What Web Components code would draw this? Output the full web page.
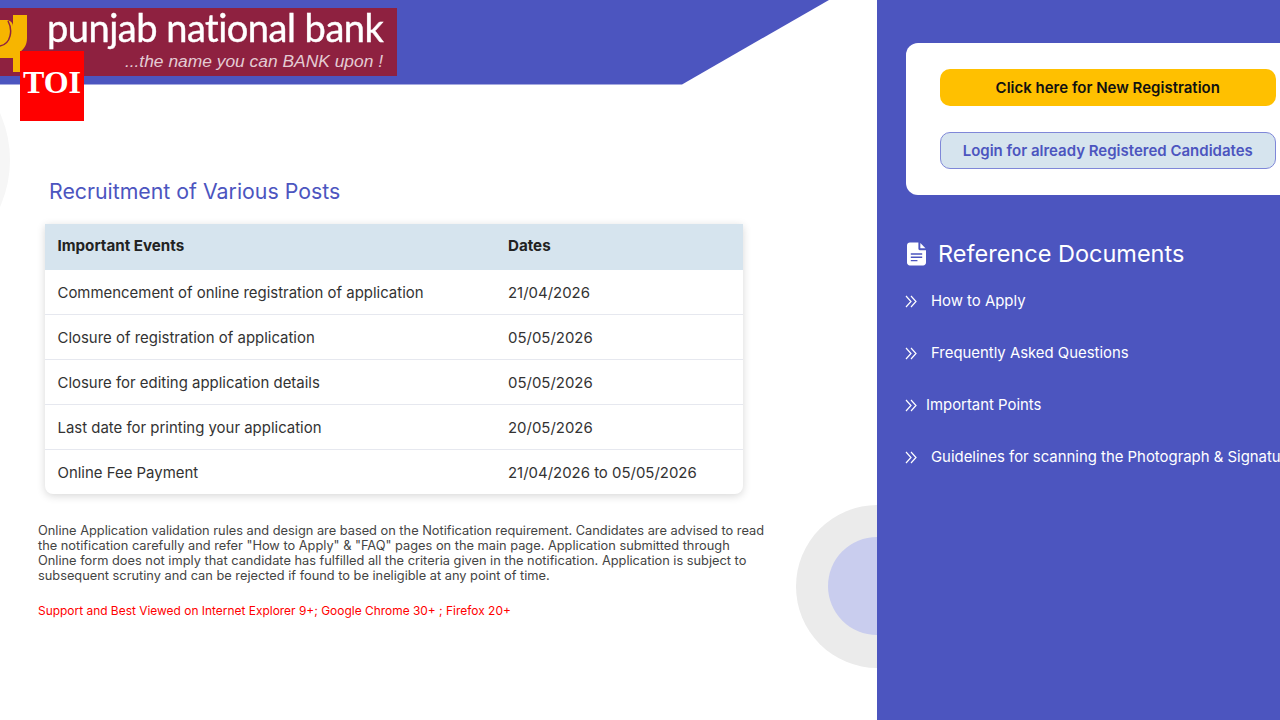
<!DOCTYPE html>
<html>
<head>
<meta charset="utf-8">
<title>Recruitment of Various Posts</title>
<style>
    html, body { margin: 0; padding: 0; height: 100%; overflow: hidden; background: #fff; }
    body { font-family: Inter, "Liberation Sans", sans-serif; }
</style>
</head>
<body>
<recruit-page>
    <page-header slot="header"></page-header>
    <main-panel slot="main" heading="Recruitment of Various Posts">
        <events-table></events-table>
        <p>Online Application validation rules and design are based on the Notification requirement. Candidates are advised to read the notification carefully and refer "How to Apply" &amp; "FAQ" pages on the main page. Application submitted through Online form does not imply that candidate has fulfilled all the criteria given in the notification. Application is subject to subsequent scrutiny and can be rejected if found to be ineligible at any point of time.</p>
        <p class="red">Support and Best Viewed on Internet Explorer 9+; Google Chrome 30+ ; Firefox 20+</p>
    </main-panel>
    <side-panel slot="side"></side-panel>
</recruit-page>
<script>
class RecruitPage extends HTMLElement {
    constructor() {
        super();
        this.attachShadow({ mode: 'open' });
        this.shadowRoot.innerHTML = `
            <style>
                :host { display: block; position: relative; width: 1280px; height: 720px; overflow: hidden; }
                .cols { display: grid; grid-template-columns: 877px 403px; height: 720px; }
                .left { position: relative; overflow: hidden; display: flex; flex-direction: column; }
                .ring-left { position: absolute; left: -220px; top: 45px; width: 230px; height: 230px; border-radius: 50%; background: #f6f6f6; }
                .ring { position: absolute; left: 796px; top: 505px; width: 163px; height: 163px; border-radius: 50%; background: #ebebeb; }
                .dot { position: absolute; left: 828px; top: 537px; width: 98px; height: 98px; border-radius: 50%; background: #c9cdee; }
                .toi { position: absolute; left: 20px; top: 51px; width: 64px; height: 70px; padding-bottom: 8px; box-sizing: border-box; background: #f00; color: #fff;
                       display: flex; align-items: center; justify-content: center;
                       font: bold 32px "Liberation Serif", serif; }
            </style>
            <div class="cols">
                <div class="left">
                    <div class="ring-left"></div>
                    <div class="ring"></div>
                    <div class="dot"></div>
                    <slot name="header"></slot>
                    <slot name="main"></slot>
                </div>
                <slot name="side"></slot>
            </div>
            <div class="toi">TOI</div>
        `;
    }
}

class PageHeader extends HTMLElement {
    constructor() {
        super();
        this.attachShadow({ mode: 'open' });
        this.shadowRoot.innerHTML = `
            <style>
                :host { display: block; height: 85px; background: #4c55bf; clip-path: polygon(0 0, 829px 0, 682px 84.5px, 0 84.5px); padding-top: 8px; box-sizing: border-box; position: relative; }
                .logo { width: 397px; height: 68px; background: #8e2140; position: relative; }
                svg { position: absolute; left: 0; top: 0; filter: blur(.4px); }
                .name { position: absolute; left: 47px; top: -1px; color: #fff; font: 400 38px/40px Lato, sans-serif; letter-spacing: -.5px; white-space: nowrap; -webkit-text-stroke: .4px #fff; filter: blur(.3px); }
                .tag { position: absolute; right: 14px; top: 42px; color: #e4cbd3; font: italic 17.4px/22px "Liberation Sans", sans-serif; white-space: nowrap; }
            </style>
            <div class="logo">
                <svg width="30" height="68" viewBox="0 0 30 68">
                    <path d="M13 7H27V30C27 37 24 41 20 44V64H13V50H0V12H6C9 12 13 14 13 18Z" fill="#f7b500"/>
                    <path d="M8 13C13 22 11 36 0 38" fill="none" stroke="#8e2140" stroke-width="1.500"/>
                </svg>
                <span class="name">punjab national bank</span>
                <span class="tag">...the name you can BANK upon !</span>
            </div>
        `;
    }
}

class MainPanel extends HTMLElement {
    constructor() {
        super();
        this.attachShadow({ mode: 'open' });
        this.shadowRoot.innerHTML = `
            <style>
                :host { display: block; padding: 93px 0 0 38px; position: relative; }
                h2 { margin: 0 0 19px 11px; font: 400 21.3px/27px Inter, sans-serif; color: #4c55bf; }
                ::slotted(p) { width: 730px; margin: 0 0 20px; font: 400 12.8px/15px Inter, sans-serif; color: #444; }
                ::slotted(p.red) { color: #f00; font-size: 11.950px; }
            </style>
            <h2>${this.getAttribute('heading')}</h2>
            <slot></slot>
        `;
    }
}

class EventsTable extends HTMLElement {
    constructor() {
        super();
        this.attachShadow({ mode: 'open' });
        const rows = [
            ['Commencement of online registration of application', '21/04/2026'],
            ['Closure of registration of application', '05/05/2026'],
            ['Closure for editing application details', '05/05/2026'],
            ['Last date for printing your application', '20/05/2026'],
            ['Online Fee Payment', '21/04/2026 to 05/05/2026']
        ];
        this.shadowRoot.innerHTML = `
            <style>
                :host { display: block; width: 698px; margin: 0 0 29px 7px; border-radius: 0 0 8px 8px; background: #fff; box-shadow: 0 2px 8px rgba(0,0,0,.16); overflow: hidden; font: 400 14.95px/20px Inter, sans-serif; color: #333; }
                .row { display: grid; grid-template-columns: 450.500px 1fr; padding: 1px 12.500px 0; height: 45px; align-items: center; border-bottom: 1px solid #e6e8ef; box-sizing: border-box; }
                .row:last-child { height: 44px; border: 0; }
                .head { height: 46px; padding: 0 12.500px 2px; background: #d6e4ee; border: 0; font-size: 15.150px; font-weight: 700; color: #222; }
            </style>
            <div class="row head"><span>Important Events</span><span>Dates</span></div>
            ${rows.map(r => `<div class="row"><span>${r[0]}</span><span>${r[1]}</span></div>`).join('')}
        `;
    }
}

class SidePanel extends HTMLElement {
    constructor() {
        super();
        this.attachShadow({ mode: 'open' });
        const links = [
            ['How to Apply', 25],
            ['Frequently Asked Questions', 25],
            ['Important Points', 20],
            ['Guidelines for scanning the Photograph &amp; Signature', 25]
        ];
        const chevrons = `<svg width="12" height="13" viewBox="0 0 12 13" fill="none" stroke="#fff" stroke-width="1.200"><path d="M1 1l5 5.500-5 5.500M6 1l5 5.500-5 5.500"/></svg>`;
        this.shadowRoot.innerHTML = `
            <style>
                :host { display: block; background: #4c55bf; padding: 43px 0 0 29px; overflow: hidden; }
                .card { width: 400px; height: 152px; box-sizing: border-box; background: #fff; border-radius: 12px 0 0 12px; padding: 26px 0 0 34px; display: flex; flex-direction: column; gap: 26px; }
                .btn { width: 335.500px; height: 37px; box-sizing: border-box; border-radius: 10px; display: flex; align-items: center; justify-content: center; font: 600 15px/20px Inter, sans-serif; }
                .new { background: #ffc000; color: #111; }
                .login { background: #d6e4ee; color: #4c55bf; border: 1px solid #7f87d8; }
                h3 { margin: 42px 0 0 1px; display: flex; align-items: center; gap: 12px; height: 34px; color: #fff; font: 400 23.5px/34px Inter, sans-serif; }
                ul { list-style: none; margin: 4px 0 0; padding: 0; width: 500px; }
                li { height: 52px; display: flex; align-items: center; color: #fff; font: 400 14.9px/20px Inter, sans-serif; white-space: nowrap; }
                li svg { flex: none; margin-left: -1px; }
            </style>
            <div class="card">
                <div class="btn new">Click here for New Registration</div>
                <div class="btn login">Login for already Registered Candidates</div>
            </div>
            <h3>
                <svg width="19" height="24" viewBox="0 0 20 24">
                    <path d="M3 0H12V6.500C12 7.300 12.700 8 13.500 8H20V21C20 22.700 18.700 24 17 24H3C1.300 24 0 22.700 0 21V3C0 1.300 1.300 0 3 0Z" fill="#fff"/>
                    <path d="M14 0.500L19.500 6H14Z" fill="#fff"/>
                    <path d="M4 12H16M4 15.500H16M4 19H11" stroke="#4c55bf" stroke-width="1.500"/>
                </svg>
                Reference Documents
            </h3>
            <ul>
                ${links.map(l => `<li>${chevrons}<span style="margin-left:${l[1] - 11}px">${l[0]}</span></li>`).join('')}
            </ul>
        `;
    }
}

customElements.define('recruit-page', RecruitPage);
customElements.define('page-header', PageHeader);
customElements.define('main-panel', MainPanel);
customElements.define('events-table', EventsTable);
customElements.define('side-panel', SidePanel);
</script>
</body>
</html>
